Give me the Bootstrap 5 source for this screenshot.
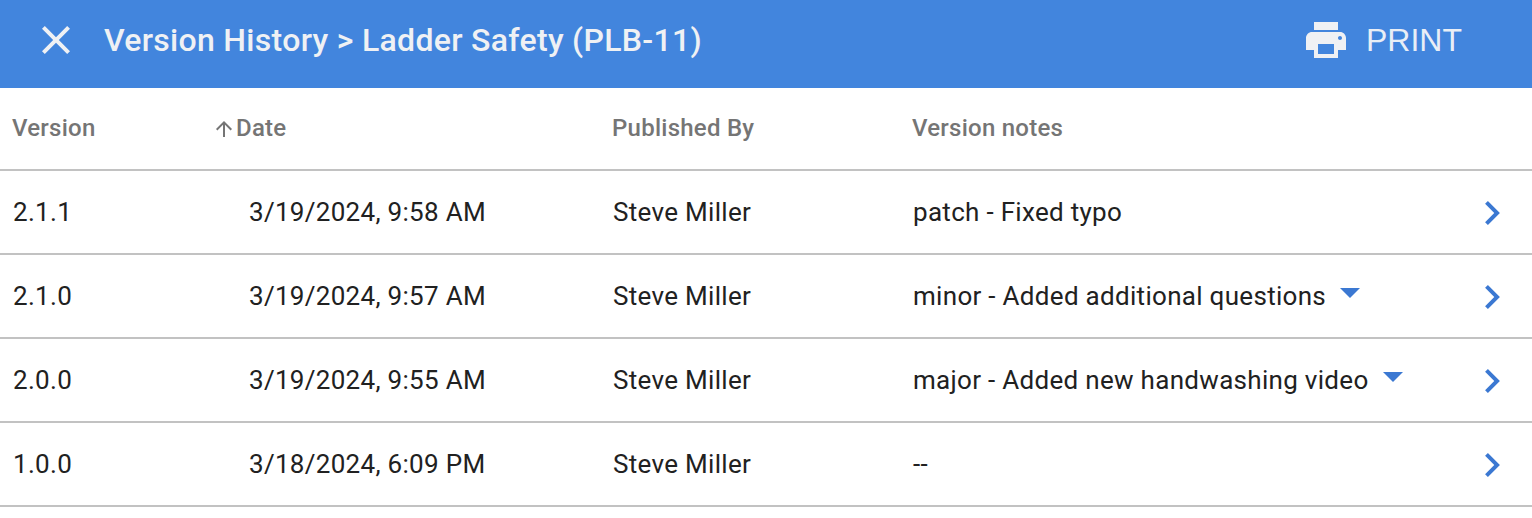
<!DOCTYPE html>
<html lang="en">
  <head>
    <meta charset="UTF-8" />
    <title>Version History</title>
    <link href="https://cdn.jsdelivr.net/npm/bootstrap@5.3.0/dist/css/bootstrap.min.css" rel="stylesheet" />
    <style>
      body {
        font-family: Roboto, sans-serif;
        background: #fff;
        overflow: hidden;
      }
      .top-bar {
        height: 88px;
        background: #4285dd;
        color: #eff1f4;
        padding: 0 70px 8px 42px;
      }
      .top-title {
        font-size: 32px;
        font-weight: 500;
        margin: 0 0 0 34px;
        line-height: 1;
        letter-spacing: 0.3px;
      }
      .print-btn {
        font-family: "Liberation Sans", Arial, sans-serif;
        font-size: 32px;
        color: #e9eef6;
        gap: 20px;
      }
      .history-table {
        table-layout: fixed;
        width: 100%;
        border-collapse: collapse;
      }
      .history-table th {
        height: 82px;
        font-size: 24px;
        font-weight: 500;
        letter-spacing: 0.25px;
        color: #757575;
        padding: 0 0 2px 12px;
        vertical-align: middle;
      }
      .history-table td {
        height: 84px;
        font-size: 26px;
        letter-spacing: 0.3px;
        color: #212121;
        padding: 0 0 0 13px;
        vertical-align: middle;
      }
      .history-table tr {
        border-bottom: 2px solid #c2c2c2;
      }
      .history-table th.date-head {
        padding-left: 16px;
      }
      .history-table td.date-cell {
        padding-left: 49px;
      }
      .history-table td.go-cell {
        padding-left: 23px;
      }
      .sort-arrow {
        margin-right: 4px;
        vertical-align: -1px;
      }
      .notes-arrow {
        margin-left: 14px;
        vertical-align: 7px;
      }
      .go-arrow {
        display: block;
        margin-top: 1px;
      }
    </style>
  </head>
  <body>
    <div class="top-bar d-flex align-items-center justify-content-between">
      <div class="d-flex align-items-center">
        <svg width="28" height="28" viewBox="5 5 14 14" aria-hidden="true">
          <path fill="#eff1f4" d="M19 6.41 17.59 5 12 10.59 6.41 5 5 6.41 10.59 12 5 17.59 6.41 19 12 13.41 17.59 19 19 17.59 13.41 12z" />
        </svg>
        <h1 class="top-title">Version History &gt; Ladder Safety (PLB-11)</h1>
      </div>
      <div class="print-btn d-flex align-items-center">
        <svg width="40" height="36" viewBox="2 3 20 18" aria-hidden="true">
          <path fill="#eff1f4" d="M19 8H5c-1.66 0-3 1.34-3 3v6h4v4h12v-4h4v-6c0-1.66-1.34-3-3-3zm-3 11H8v-5h8v5zm3-7c-.55 0-1-.45-1-1s.45-1 1-1 1 .45 1 1-.45 1-1 1zm-1-9H6v4h12V3z" />
        </svg>
        <span>PRINT</span>
      </div>
    </div>

    <table class="history-table">
      <colgroup>
        <col style="width: 200px" />
        <col style="width: 400px" />
        <col style="width: 300px" />
        <col />
        <col style="width: 70px" />
      </colgroup>
      <thead>
        <tr>
          <th>Version</th>
          <th class="date-head">
            <svg class="sort-arrow" width="16" height="16" viewBox="4 4 16 16" aria-hidden="true">
              <path fill="#757575" d="M4 12l1.41 1.41L11 7.83V20h2V7.83l5.58 5.59L20 12l-8-8-8 8z" />
            </svg>Date
          </th>
          <th>Published By</th>
          <th>Version notes</th>
          <th></th>
        </tr>
      </thead>
      <tbody id="rows"></tbody>
    </table>

    <script>
      const versions = [
        ['2.1.1', '3/19/2024, 9:58 AM', 'patch - Fixed typo', false],
        ['2.1.0', '3/19/2024, 9:57 AM', 'minor - Added additional questions', true],
        ['2.0.0', '3/19/2024, 9:55 AM', 'major - Added new handwashing video', true],
        ['1.0.0', '3/18/2024, 6:09 PM', '--', false]
      ]
      const caret = '<svg class="notes-arrow" width="20" height="10" viewBox="0 0 20 10"><path d="M0 0h20L10 10z" fill="#3b78d2"/></svg>'
      const chevron = '<svg class="go-arrow" width="15" height="24" viewBox="8.59 6 7.41 12"><path d="M10 6 8.59 7.41 13.17 12l-4.58 4.59L10 18l6-6z" fill="#3b78d2"/></svg>'
      const tbody = document.getElementById('rows')
      versions.forEach(([version, date, notes, more]) => {
        const row = document.createElement('tr')
        row.innerHTML = `<td>${version}</td><td class="date-cell">${date}</td><td>Steve Miller</td><td>${notes}${more ? caret : ''}</td><td class="go-cell">${chevron}</td>`
        tbody.appendChild(row)
      })
    </script>
    <script src="https://cdn.jsdelivr.net/npm/bootstrap@5.3.0/dist/js/bootstrap.bundle.min.js"></script>
  </body>
</html>
